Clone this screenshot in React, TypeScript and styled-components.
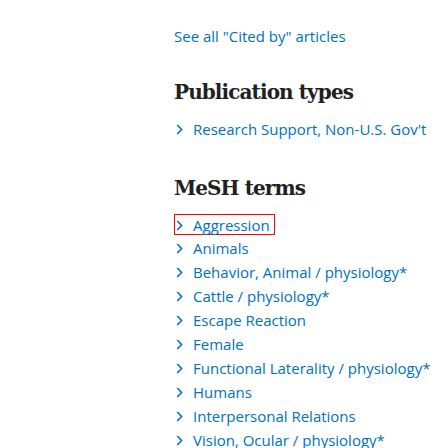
import React from "react";
import styled, { createGlobalStyle } from "styled-components";

const Global = createGlobalStyle`
  html, body { margin: 0; padding: 0; background: #fff; }
  body { font-family: "Open Sans", "Noto Sans", sans-serif; }
`;

const Page = styled.div`
  width: 448px;
  height: 448px;
  overflow: hidden;
  box-sizing: border-box;
  padding: 26px 0 0 174px;
  display: flex;
  flex-direction: column;
  align-items: flex-start;
`;

const SeeAll = styled.a`
  display: block;
  font-size: 15px;
  line-height: 20px;
  height: 20px;
  color: #0071bc;
  text-decoration: none;
`;

const Heading = styled.h2<{ $top: number }>`
  margin: ${(p) => p.$top}px 0 0 0;
  font-family: "DejaVu Serif", "Liberation Serif", serif;
  font-weight: 700;
  font-size: 20px;
  line-height: 28px;
  height: 28px;
  color: #212121;
  letter-spacing: -0.9px;
`;

const List = styled.ul<{ $top: number }>`
  list-style: none;
  margin: ${(p) => p.$top}px 0 0 0;
  padding: 0;
  display: flex;
  flex-direction: column;
`;

const Item = styled.li`
  display: flex;
  align-items: center;
  height: 24px;
  font-size: 15px;
  line-height: 20px;
`;

const Link = styled.a<{ $focused?: boolean }>`
  display: flex;
  align-items: center;
  gap: 10px;
  color: #0071bc;
  text-decoration: none;
  box-sizing: border-box;
  white-space: nowrap;
  height: ${(p) => (p.$focused ? "21px" : "20px")};
  border: ${(p) => (p.$focused ? "1px solid #ff0000" : "0 solid transparent")};
  padding: ${(p) => (p.$focused ? "2px 4px 0 1px" : "0 0 0 2px")};
`;

const Chevron = styled.svg`
  flex: none;
  display: block;
`;

const ChevronIcon = () => (
  <Chevron width="7" height="11" viewBox="0 0 7 11">
    <path d="M1.2 1 L5.6 5.5 L1.2 10" fill="none" stroke="#0071bc" strokeWidth="1.6" />
  </Chevron>
);

const mesh = [
  "Animals",
  "Behavior, Animal / physiology*",
  "Cattle / physiology*",
  "Escape Reaction",
  "Female",
  "Functional Laterality / physiology*",
  "Humans",
  "Interpersonal Relations",
  "Vision, Ocular / physiology*",
];

export default function App() {
  return (
    <Page>
      <Global />
      <SeeAll href="#">See all "Cited by" articles</SeeAll>
      <Heading $top={32}>Publication types</Heading>
      <List $top={11}>
        <Item>
          <Link href="#">
            <ChevronIcon />
            <span>Research Support, Non-U.S. Gov't</span>
          </Link>
        </Item>
      </List>
      <Heading $top={33}>MeSH terms</Heading>
      <List $top={10}>
        <Item>
          <Link href="#" $focused>
            <ChevronIcon />
            <span>Aggression</span>
          </Link>
        </Item>
        {mesh.map((m) => (
          <Item key={m}>
            <Link href="#">
              <ChevronIcon />
              <span>{m}</span>
            </Link>
          </Item>
        ))}
      </List>
    </Page>
  );
}
